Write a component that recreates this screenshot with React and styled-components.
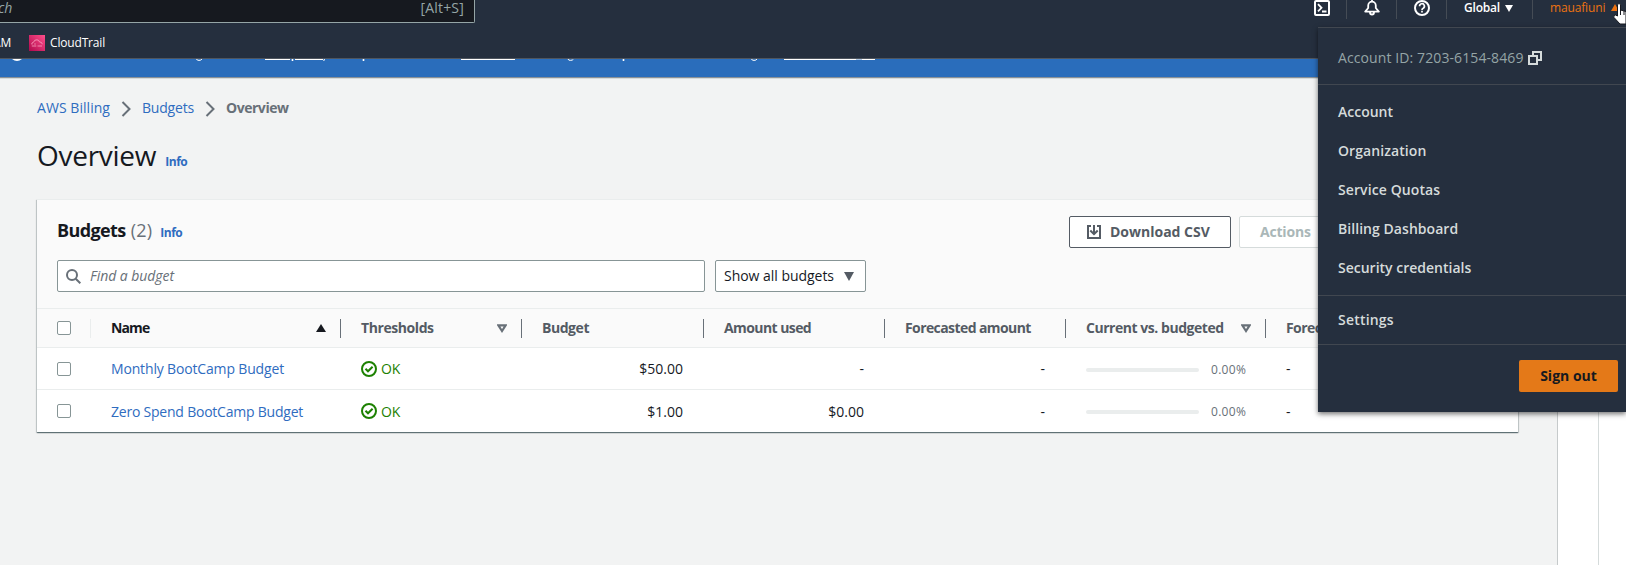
import React from 'react';
import styled, { createGlobalStyle } from 'styled-components';

const Global = createGlobalStyle`
  * { box-sizing: border-box; }
  body { margin: 0; font-family: "Open Sans", "Noto Sans", sans-serif; font-size: 14px; color: #16191f; overflow: hidden; background: #fff; }
`;

const Page = styled.div`
  display: flex;
  flex-direction: column;
  height: 565px;
  width: 1626px;
  overflow: hidden;
  position: relative;
`;

/* ---------- top navigation ---------- */
const Nav = styled.header`
  height: 59px;
  flex: none;
  background: #252f3e;
  border-bottom: 1px solid #4f565f;
  color: #fff;
  font-size: 12px;
`;
const NavRow = styled.div`
  display: flex;
  justify-content: space-between;
  align-items: flex-start;
  height: 27px;
`;
const NavSearch = styled.div`
  display: flex;
  justify-content: space-between;
  width: 475px;
  height: 23px;
  padding: 0 10px 0 0;
  background: #16191f;
  border: 1px solid #95a5a6;
  border-width: 0 1px 1px 0;
  border-radius: 0 0 2px 0;
  color: #95a5a6;
  font-size: 14px;
  line-height: 16px;
`;
const SearchHint = styled.span`
  font-style: italic;
  margin-left: -2px;
`;
const Shortcut = styled.span`
  letter-spacing: 0.2px;
`;
const NavTools = styled.div`
  display: flex;
  height: 19px;
`;
const Tool = styled.div`
  width: ${(p) => p.$w}px;
  padding-left: ${(p) => p.$pad ?? 17}px;
  border-left: ${(p) => (p.$first ? 'none' : '1px solid #454c55')};
  display: flex;
  color: ${(p) => p.$color || '#fff'};
  font-weight: ${(p) => p.$weight || 400};
  letter-spacing: ${(p) => p.$ls || 0}px;
  line-height: 16px;
  white-space: nowrap;
  svg { flex: none; }
`;
const NavCaret = styled.svg`
  margin: ${(p) => p.$top ?? 5}px 0 0 ${(p) => p.$gap}px;
`;
const Favorites = styled.div`
  display: flex;
  align-items: center;
  height: 32px;
  font-weight: 500;
  line-height: 16px;
  letter-spacing: -0.17px;
  svg { margin: 0 5px 0 18px; }
`;
const ServiceName = styled.span`
  padding-bottom: 1px;
`;
const ClippedService = styled(ServiceName)`
  margin-left: -7px;
  width: 18px;
  text-align: right;
`;

/* ---------- banner ---------- */
const Banner = styled.div`
  flex: none;
  height: 19px;
  background: #2a6dbb;
  border-bottom: 1px solid #8a9197;
  box-shadow: 0 1px 0 #d5dbdb;
  svg { display: block; }
`;

/* ---------- content ---------- */
const Body = styled.div`
  display: flex;
  flex: 1;
`;
const Main = styled.main`
  width: 1558px;
  padding: 20px 39px 0 37px;
  background: #f2f3f3;
  border-right: 1px solid #c6cacb;
  margin-top: 1px;
`;
const SidePanel = styled.aside`
  width: 41px;
  border-right: 1px solid #d5dbdb;
  background: #fff;
`;
const Crumbs = styled.nav`
  display: flex;
  align-items: center;
  height: 20px;
  line-height: 18px;
  svg { margin: 0 11px; }
`;
const Link = styled.a`
  color: #2f6cc0;
  white-space: nowrap;
  padding-bottom: ${(p) => (p.$crumb ? 2 : 0)}px;
  letter-spacing: ${(p) => p.$ls || 0}px;
`;
const Current = styled.span`
  padding-bottom: 2px;
  color: #687078;
  font-weight: 700;
  letter-spacing: -0.45px;
`;
const TitleRow = styled.div`
  display: flex;
  align-items: baseline;
  gap: 9px;
  height: 36px;
  margin-top: 18px;
`;
const Title = styled.h1`
  margin: 0;
  font-size: 28px;
  line-height: 36px;
  font-weight: 400;
  letter-spacing: -0.28px;
`;
const Info = styled.a`
  color: #2f6cc0;
  font-size: 12px;
  font-weight: 700;
  letter-spacing: -0.45px;
`;

const Card = styled.section`
  margin-top: 26px;
  height: 233px;
  background: #fff;
  border-top: 1px solid #eaeded;
  box-shadow: 0 1px 1px 0 rgba(0, 28, 36, 0.45), 1px 1px 1px 0 rgba(0, 28, 36, 0.15), -1px 1px 1px 0 rgba(0, 28, 36, 0.15);
`;
const CardHead = styled.div`
  height: 108px;
  padding: 16px 20px 0;
  background: #fafafa;
`;
const HeadRow = styled.div`
  display: flex;
  justify-content: space-between;
  height: 44px;
`;
const Heading = styled.div`
  display: flex;
  align-items: baseline;
  line-height: 28px;
`;
const CardTitle = styled.h2`
  margin: 0;
  font-size: 18px;
  font-weight: 700;
  letter-spacing: -0.6px;
`;
const Count = styled.span`
  margin: 0 8px 0 5px;
  font-size: 18px;
  letter-spacing: 0.2px;
  color: #687078;
`;
const Buttons = styled.div`
  display: flex;
  gap: 8px;
`;
const Button = styled.button`
  display: flex;
  align-items: center;
  gap: 9px;
  width: ${(p) => p.$w}px;
  height: 32px;
  padding: 0 0 0 ${(p) => p.$pad}px;
  border: 1px solid ${(p) => (p.$disabled ? '#d5dbdb' : '#545b64')};
  border-radius: 2px;
  background: #fff;
  color: ${(p) => (p.$disabled ? '#aab7b8' : '#545b64')};
  font: 700 14px "Open Sans", sans-serif;
  letter-spacing: ${(p) => p.$ls || 0}px;
  white-space: nowrap;
`;
const Label = styled.span`
  padding-bottom: 2px;
`;
const Filters = styled.div`
  display: flex;
  gap: 10px;
`;
const SearchBox = styled.div`
  display: flex;
  align-items: center;
  gap: 9px;
  width: 648px;
  height: 32px;
  padding-left: 8px;
  border: 1px solid #879596;
  border-radius: 2px;
  background: #fff;
  color: #687078;
  font-style: italic;
  letter-spacing: -0.05px;
`;
const Select = styled.div`
  display: flex;
  align-items: center;
  justify-content: space-between;
  width: 151px;
  height: 32px;
  padding: 0 11px 0 8px;
  border: 1px solid #879596;
  border-radius: 2px;
  background: #fff;
  letter-spacing: -0.03px;
`;

/* ---------- table ---------- */
const Row = styled.div`
  display: grid;
  grid-template-columns: 54px 250px 181px 182px 181px 181px 200px 252px;
  align-items: center;
  height: ${(p) => (p.$head ? 40 : 42)}px;
  background: ${(p) => (p.$head ? '#fafafa' : '#fff')};
  border-top: ${(p) => (p.$head ? '1px solid #eaeded' : 'none')};
  border-bottom: ${(p) => (p.$last ? 'none' : '1px solid #eaeded')};
`;
const HeadCell = styled.div`
  display: flex;
  align-items: center;
  justify-content: space-between;
  height: 19px;
  padding: 0 14px 0 20px;
  border-right: 1px solid ${(p) => p.$line || '#687078'};
  color: ${(p) => (p.$active ? '#16191f' : '#545b64')};
  font-weight: 700;
  letter-spacing: ${(p) => p.$ls || 0}px;
  white-space: nowrap;
`;
const Cell = styled.div`
  display: flex;
  align-items: center;
  height: 20px;
  line-height: 19px;
  padding: 0 ${(p) => (p.$right ? 21 : 20)}px 0 20px;
  justify-content: ${(p) => (p.$right ? 'flex-end' : 'flex-start')};
`;
const Check = styled.span`
  flex: none;
  width: 14px;
  height: 14px;
  border: 1px solid #879596;
  border-radius: 2px;
  background: #fff;
`;
const Ok = styled.span`
  margin-left: 4px;
  color: #1d8102;
  letter-spacing: -0.2px;
`;
const Track = styled.span`
  width: 113px;
  height: 4px;
  margin-top: 2px;
  border-radius: 2px;
  background: #eaeded;
  flex: none;
`;
const Percent = styled.span`
  margin: 1px 0 0 12px;
  color: #687078;
  font-size: 12px;
  letter-spacing: 0.3px;
`;

/* ---------- account menu ---------- */
const Menu = styled.div`
  position: absolute;
  top: 27px;
  left: 1318px;
  width: 308px;
  height: 385px;
  border-top: 1px solid #414750;
  background: #252f3e;
  box-shadow: 0 2px 5px rgba(0, 0, 0, 0.55);
  color: #d5dbdb;
`;
const AccountId = styled.div`
  display: flex;
  align-items: center;
  gap: 4px;
  height: 57px;
  padding: 4px 0 0 20px;
  border-bottom: 1px solid #414750;
  color: #95a5a6;
  letter-spacing: 0.1px;
`;
const Group = styled.div`
  padding: ${(p) => p.$py}px 0 ${(p) => p.$pb}px;
  border-bottom: 1px solid #414750;
`;
const Item = styled.div`
  height: 39px;
  padding-left: 20px;
  line-height: 38px;
  font-weight: 600;
  letter-spacing: ${(p) => p.$ls || 0}px;
`;
const SignOut = styled.button`
  display: block;
  width: 99px;
  height: 32px;
  margin: 15px 8px 0 auto;
  padding: 0 0 1px;
  border: 0;
  border-radius: 2px;
  background: #e47918;
  color: #16191f;
  font: 700 14px "Open Sans", sans-serif;
`;
const Pointer = styled.svg`
  position: absolute;
  top: 2px;
  left: 1612px;
`;

const Chevron = () => (
  <svg width="10" height="16" viewBox="0 0 10 16" fill="none" stroke="#687078" strokeWidth="2">
    <path d="M1.500 1l7 7-7 7" />
  </svg>
);
const CaretUp = () => (
  <svg width="10" height="8" viewBox="0 0 10 8"><path d="M5 0l5 8H0z" fill="#16191f" /></svg>
);
const CaretOpen = () => (
  <svg width="10" height="9" viewBox="0 0 10 9"><path d="M1.400 1.400h7.200L5 7z" fill="none" stroke="#687078" strokeWidth="2.100" /></svg>
);
const OkIcon = () => (
  <svg width="16" height="16" viewBox="0 0 16 16" fill="none" stroke="#1d8102" strokeWidth="2">
    <circle cx="8" cy="8" r="7" /><path d="M4.500 7.700l2.500 2.600 4.600-4.600" />
  </svg>
);

const columns = [
  { label: 'Name', active: true, ls: -0.9, icon: 'up' },
  { label: 'Thresholds', ls: -0.42, icon: 'down' },
  { label: 'Budget', ls: -0.45 },
  { label: 'Amount used', ls: -0.58 },
  { label: 'Forecasted amount', ls: -0.59 },
  { label: 'Current vs. budgeted', ls: -0.46, icon: 'down' },
  { label: 'Forecasted', ls: -0.57 },
];
const budgets = [
  { name: 'Monthly BootCamp Budget', ls: -0.16, amount: '$50.00', used: '-' },
  { name: 'Zero Spend BootCamp Budget', ls: -0.22, amount: '$1.00', used: '$0.00' },
];

export default function App() {
  return (
    <Page>
      <Global />
      <Nav>
        <NavRow>
          <NavSearch><SearchHint>ch</SearchHint><Shortcut>[Alt+S]</Shortcut></NavSearch>
          <NavTools>
            <Tool $w={32} $pad={0} $first>
              <svg width="16" height="16" viewBox="0 0 16 16" fill="none" stroke="#fff" strokeWidth="2">
                <rect x="1" y="1" width="14" height="14" rx="1" /><path d="M4 4.200l3.500 3.600L4 11.400M8 11.500h4.500" strokeWidth="1.800" />
              </svg>
            </Tool>
            <Tool $w={50}>
              <svg width="16" height="16" viewBox="0 0 16 16" fill="none" stroke="#fff" strokeWidth="1.800" strokeLinejoin="round">
                <path d="M8 0v2M4.200 8V5.500a3.800 3.800 0 0 1 7.600 0V8l3 3.600H1.200zM6 12.500a2 2 0 0 0 4 0" />
              </svg>
            </Tool>
            <Tool $w={50}>
              <svg width="16" height="16" viewBox="0 0 16 16" fill="none" stroke="#fff" strokeWidth="2">
                <circle cx="8" cy="8" r="7" />
                <path d="M5.600 6.300A2.400 2.400 0 1 1 9.200 8.200Q8 8.700 8 10M8 10.800v1.600" strokeWidth="1.700" />
              </svg>
            </Tool>
            <Tool $w={86} $weight={600} $ls={-0.2}>
              Global
              <NavCaret $gap={5} width="8" height="7" viewBox="0 0 8 7"><path d="M0 0h8L4 7z" fill="#fff" /></NavCaret>
            </Tool>
            <Tool $w={94} $color="#ec7211" $ls={-0.15}>
              mauafiuni
              <NavCaret $gap={6} $top={4} width="8" height="7" viewBox="0 0 8 7"><path d="M4 0l4 7H0z" fill="#ec7211" /></NavCaret>
            </Tool>
          </NavTools>
        </NavRow>
        <Favorites>
          <ClippedService>AM</ClippedService>
          <svg width="16" height="16" viewBox="0 0 16 16" fill="none">
            <defs><linearGradient id="trail" x1="0" y1="1" x2="1" y2="0"><stop stopColor="#b0084d" /><stop offset="1" stopColor="#ff4f8b" /></linearGradient></defs>
            <rect width="16" height="16" fill="url(#trail)" />
            <path d="M3 9.600Q2 7.600 4.600 7.200 5.200 4.600 8 4.800q2 .2 2.400 2 2.600.2 3 2.400M2.800 11h4.500M8.500 11h4.500M5.200 9h1.600" stroke="#ffb3cc" strokeWidth=".7" />
          </svg>
          <ServiceName>CloudTrail</ServiceName>
        </Favorites>
      </Nav>
      <Banner>
        <svg width="1318" height="4" viewBox="0 0 1318 4" fill="none" stroke="#fff">
          <path d="M12 0q5 4 10 0z" fill="#fff" stroke="none" />
          <path d="M265 .5h25M295 .5h28M461 .5h54M784 .5h72M862 .5h13" />
          <path d="M856 .5h6" strokeOpacity=".6" />
          <path d="M292.500 0v2M363.500 0v2M623.500 0v2" strokeWidth="1.600" />
          <path d="M324.500 0l-.8 2M196.500 0q.3 1.400 2.500 1.400t3-1.400M568 0q.3 1.400 2.500 1.400t3-1.400M751.500 0q.3 1.400 2.500 1.400t3-1.400" />
        </svg>
      </Banner>
      <Body>
        <Main>
          <Crumbs>
            <Link $crumb $ls={0.05}>AWS Billing</Link><Chevron /><Link $crumb $ls={-0.2}>Budgets</Link><Chevron /><Current>Overview</Current>
          </Crumbs>
          <TitleRow><Title>Overview</Title><Info>Info</Info></TitleRow>
          <Card>
            <CardHead>
              <HeadRow>
                <Heading><CardTitle>Budgets</CardTitle><Count>(2)</Count><Info>Info</Info></Heading>
                <Buttons>
                  <Button $w={162} $pad={17}>
                    <svg width="14" height="14" viewBox="0 0 14 14" fill="none" stroke="#545b64" strokeWidth="2">
                      <path d="M4 1H1v12h12V1h-3M7 0v9M3.300 5.500L7 9.200l3.700-3.700" />
                    </svg>
                    <Label>Download CSV</Label>
                  </Button>
                  <Button $w={259} $pad={20} $disabled $ls={-0.2}><Label>Actions</Label></Button>
                </Buttons>
              </HeadRow>
              <Filters>
                <SearchBox>
                  <svg width="15" height="15" viewBox="0 0 15 15" fill="none" stroke="#687078" strokeWidth="2">
                    <circle cx="6" cy="6" r="5" /><path d="M9.700 9.700l4.600 4.600" />
                  </svg>
                  <Label>Find a budget</Label>
                </SearchBox>
                <Select>
                  <Label>Show all budgets</Label>
                  <svg width="10" height="9" viewBox="0 0 10 9"><path d="M0 0h10L5 9z" fill="#545b64" /></svg>
                </Select>
              </Filters>
            </CardHead>
            <Row $head>
              <HeadCell $line="#eaeded"><Check /></HeadCell>
              {columns.map((c, i) => (
                <HeadCell key={c.label} $active={c.active} $ls={c.ls} $line={i === 6 ? 'transparent' : undefined}>
                  <Label>{c.label}</Label>
                  {c.icon === 'up' && <CaretUp />}
                  {c.icon === 'down' && <CaretOpen />}
                </HeadCell>
              ))}
            </Row>
            {budgets.map((b, i) => (
              <Row key={b.name} $last={i === budgets.length - 1}>
                <Cell><Check /></Cell>
                <Cell><Link $ls={b.ls}>{b.name}</Link></Cell>
                <Cell><OkIcon /><Ok>OK</Ok></Cell>
                <Cell $right>{b.amount}</Cell>
                <Cell $right>{b.used}</Cell>
                <Cell $right>-</Cell>
                <Cell><Track /><Percent>0.00%</Percent></Cell>
                <Cell>-</Cell>
              </Row>
            ))}
          </Card>
        </Main>
        <SidePanel />
      </Body>
      <Menu>
        <AccountId>
          <Label>Account ID: 7203-6154-8469</Label>
          <svg width="14" height="14" viewBox="0 0 14 14" fill="none" stroke="#d5dbdb" strokeWidth="2">
            <path d="M1 5h8v8H1zM5 5V1h8v8H9" />
          </svg>
        </AccountId>
        <Group $py={8} $pb={7}>
          <Item>Account</Item>
          <Item $ls={0.08}>Organization</Item>
          <Item $ls={0.1}>Service Quotas</Item>
          <Item $ls={0.05}>Billing Dashboard</Item>
          <Item>Security credentials</Item>
        </Group>
        <Group $py={5} $pb={4}><Item $ls={0.2}>Settings</Item></Group>
        <SignOut>Sign out</SignOut>
      </Menu>
      <Pointer width="14" height="24" viewBox="0 0 14 24">
        <path d="M5.500 2.500Q7 .500 8.500 2.500V8l5.500 1.500V22H8L2 15.500Q1 13 3.500 13l2 1z" fill="#fff" stroke="#16191f" strokeWidth="1" />
        <path d="M8.500 8v5M12 9v4" stroke="#16191f" strokeWidth="1" />
      </Pointer>
    </Page>
  );
}
